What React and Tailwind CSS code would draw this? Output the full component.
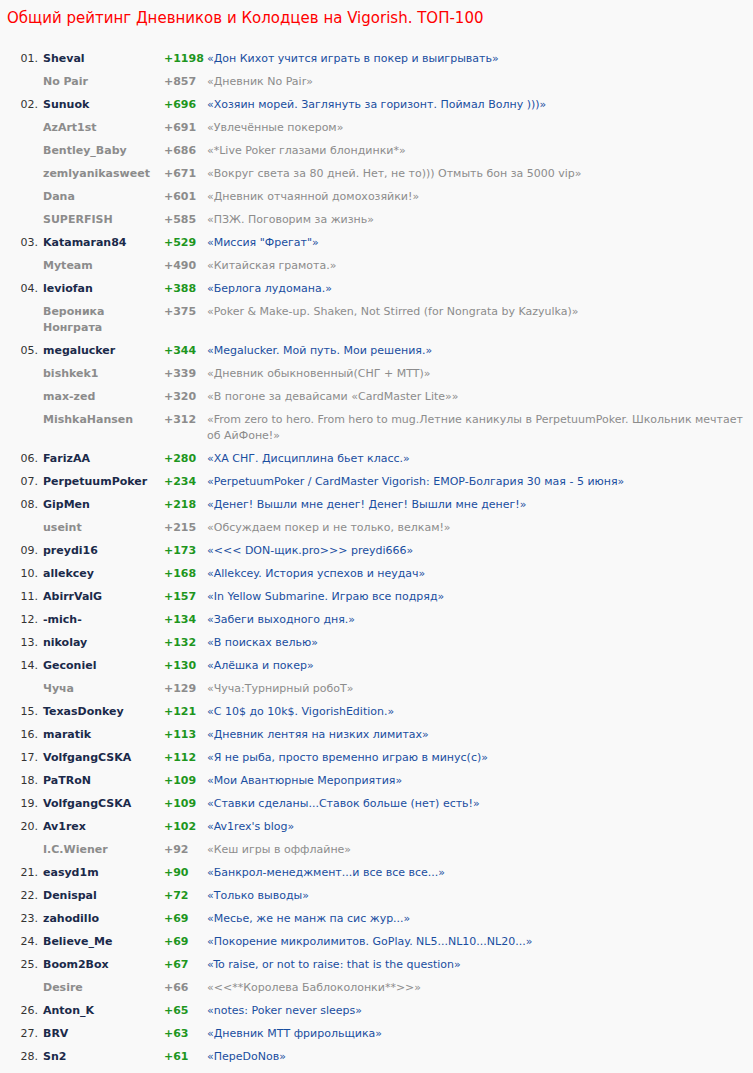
const rows = [
  ["01.", "Sheval", "+1198", "«Дон Кихот учится играть в покер и выигрывать»"],
  ["", "No Pair", "+857", "«Дневник No Pair»"],
  ["02.", "Sunuok", "+696", "«Хозяин морей. Заглянуть за горизонт. Поймал Волну )))»"],
  ["", "AzArt1st", "+691", "«Увлечённые покером»"],
  ["", "Bentley_Baby", "+686", "«*Live Poker глазами блондинки*»"],
  ["", "zemlyanikasweet", "+671", "«Вокруг света за 80 дней. Нет, не то))) Отмыть бон за 5000 vip»"],
  ["", "Dana", "+601", "«Дневник отчаянной домохозяйки!»"],
  ["", "SUPERFISH", "+585", "«ПЗЖ. Поговорим за жизнь»"],
  ["03.", "Katamaran84", "+529", "«Миссия \"Фрегат\"»"],
  ["", "Myteam", "+490", "«Китайская грамота.»"],
  ["04.", "leviofan", "+388", "«Берлога лудомана.»"],
  ["", "Вероника Нонграта", "+375", "«Poker & Make-up. Shaken, Not Stirred (for Nongrata by Kazyulka)»"],
  ["05.", "megalucker", "+344", "«Megalucker. Мой путь. Мои решения.»"],
  ["", "bishkek1", "+339", "«Дневник обыкновенный(СНГ + МТТ)»"],
  ["", "max-zed", "+320", "«В погоне за девайсами «CardMaster Lite»»"],
  ["", "MishkaHansen", "+312", "«From zero to hero. From hero to mug.Летние каникулы в PerpetuumPoker. Школьник мечтает об АйФоне!»"],
  ["06.", "FarizAA", "+280", "«ХА СНГ. Дисциплина бьет класс.»"],
  ["07.", "PerpetuumPoker", "+234", "«PerpetuumPoker / CardMaster Vigorish: EMOP-Болгария 30 мая - 5 июня»"],
  ["08.", "GipMen", "+218", "«Денег! Вышли мне денег! Денег! Вышли мне денег!»"],
  ["", "useint", "+215", "«Обсуждаем покер и не только, велкам!»"],
  ["09.", "preydi16", "+173", "«<<< DON-щик.pro>>> preydi666»"],
  ["10.", "allekcey", "+168", "«Allekcey. История успехов и неудач»"],
  ["11.", "AbirrValG", "+157", "«In Yellow Submarine. Играю все подряд»"],
  ["12.", "-mich-", "+134", "«Забеги выходного дня.»"],
  ["13.", "nikolay", "+132", "«В поисках велью»"],
  ["14.", "Geconiel", "+130", "«Алёшка и покер»"],
  ["", "Чуча", "+129", "«Чуча:Турнирный робоТ»"],
  ["15.", "TexasDonkey", "+121", "«С 10$ до 10k$. VigorishEdition.»"],
  ["16.", "maratik", "+113", "«Дневник лентяя на низких лимитах»"],
  ["17.", "VolfgangCSKA", "+112", "«Я не рыба, просто временно играю в минус(с)»"],
  ["18.", "PaTRoN", "+109", "«Мои Авантюрные Мероприятия»"],
  ["19.", "VolfgangCSKA", "+109", "«Ставки сделаны...Ставок больше (нет) есть!»"],
  ["20.", "Av1rex", "+102", "«Av1rex's blog»"],
  ["", "I.C.Wiener", "+92", "«Кеш игры в оффлайне»"],
  ["21.", "easyd1m", "+90", "«Банкрол-менеджмент...и все все все...»"],
  ["22.", "Denispal", "+72", "«Только выводы»"],
  ["23.", "zahodillo", "+69", "«Месье, же не манж па сис жур...»"],
  ["24.", "Believe_Me", "+69", "«Покорение микролимитов. GoPlay. NL5...NL10...NL20...»"],
  ["25.", "Boom2Box", "+67", "«To raise, or not to raise: that is the question»"],
  ["", "Desire", "+66", "«<<**Королева Баблоколонки**>>»"],
  ["26.", "Anton_K", "+65", "«notes: Poker never sleeps»"],
  ["27.", "BRV", "+63", "«Дневник МТТ фрирольщика»"],
  ["28.", "Sn2", "+61", "«ПереDoNов»"],
];

export default function App() {
  return (
    <div className="min-h-[1073px] w-[753px] bg-[#f9f9f9] font-['DejaVu_Sans',sans-serif] overflow-hidden">
      <h1 className="pl-[7px] pt-[7px] text-[15px] leading-[22px] text-[#ff0000] whitespace-nowrap">
        Общий рейтинг Дневников и Колодцев на Vigorish. ТОП-100
      </h1>
      <div className="mt-[19px] text-[11px] leading-[16px]">
        {rows.map(([num, name, score, title], i) => {
          const active = num !== "";
          return (
            <div key={i} className="grid grid-cols-[38px_126px_43px_1fr] pt-[3px] pb-[4px]">
              <div className="text-right text-[#333333]">{num}</div>
              <div className={"pl-[5px] font-bold " + (active ? "text-[#1b2a4a]" : "text-[#8c8c8c]")}>{name}</div>
              <div className={"font-bold " + (active ? "text-[#1e961e]" : "text-[#8c8c8c]")}>{score}</div>
              <div className={"pr-[6px] " + (active ? "text-[#1a4ea0]" : "text-[#8c8c8c]")}>{title}</div>
            </div>
          );
        })}
      </div>
    </div>
  );
}
